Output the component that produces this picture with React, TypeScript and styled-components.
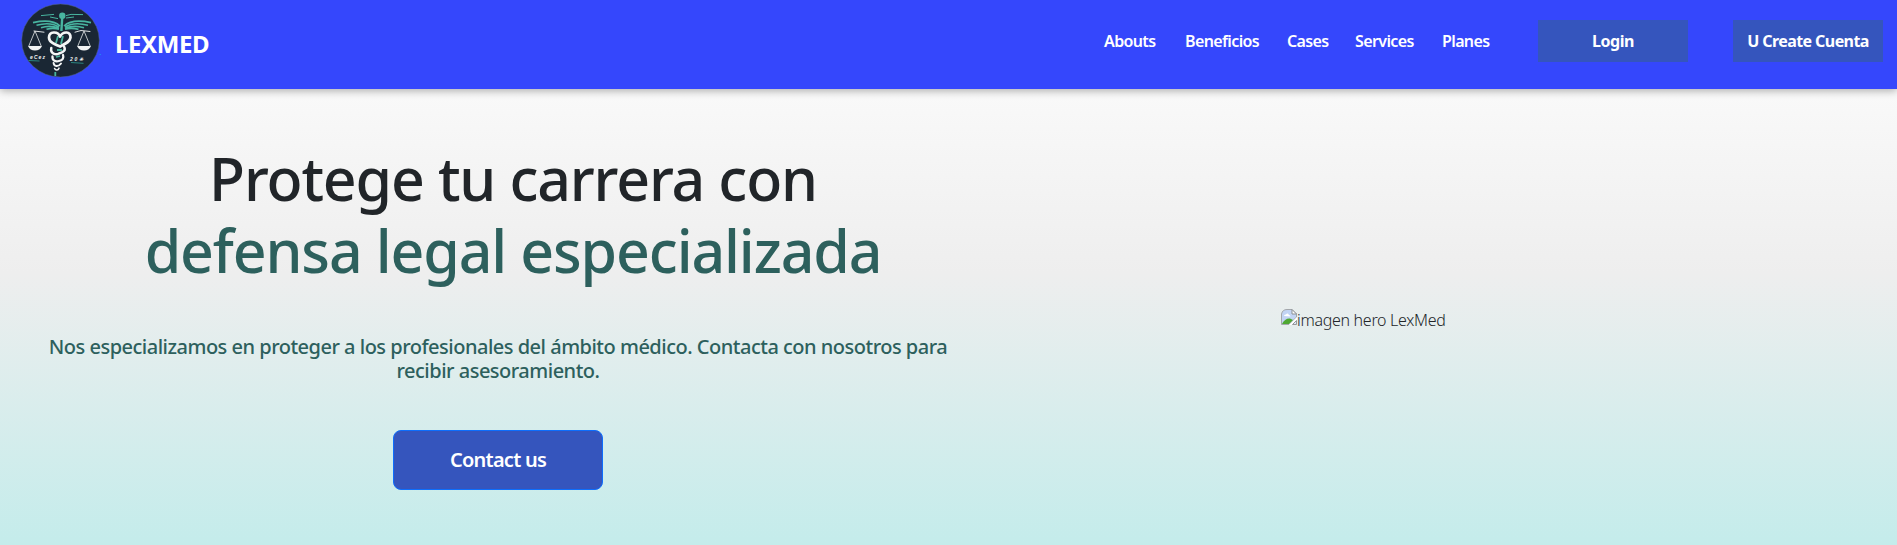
import React from 'react';
import styled, { createGlobalStyle } from 'styled-components';

const GlobalStyle = createGlobalStyle`
  * { box-sizing: border-box; }
  body {
    margin: 0;
    font-family: "Segoe UI", "Noto Sans", sans-serif;
    font-size: 16px;
    line-height: 24px;
    color: #212529;
  }
`;

const Page = styled.div`
  display: flex;
  flex-direction: column;
  height: 545px;
  overflow: hidden;
  background: linear-gradient(180deg, #ffffff 0%, #eeeeee 50%, #c4eceb 100%);
`;

const Navbar = styled.nav`
  display: flex;
  flex: none;
  align-items: flex-start;
  justify-content: space-between;
  height: 89px;
  padding: 0 14px 0 20px;
  background: #3547fc;
  box-shadow: 0 2px 8px rgba(0, 0, 0, 0.3);
`;

const Brand = styled.a`
  display: flex;
  align-items: center;
  gap: 14px;
  height: 89px;
  color: #fff;
`;

const Logo = styled.svg`
  display: block;
  width: 81px;
  height: 89px;
`;

const BrandName = styled.span`
  padding-bottom: 2px;
  font-size: 24px;
  line-height: 36px;
  font-weight: 700;
  letter-spacing: -0.4px;
`;

const Menu = styled.div`
  display: flex;
  align-items: center;
  padding-top: 20px;
`;

const Links = styled.ul`
  display: flex;
  gap: 28px;
  margin: 0 48px 0 0;
  padding: 0;
  list-style: none;
`;

const NavLink = styled.li<{ $width: number }>`
  width: ${(p) => p.$width}px;
  white-space: nowrap;
  font-weight: 600;
  letter-spacing: -0.62px;
  color: #fff;
`;

const Actions = styled.div`
  display: flex;
  gap: 45px;
`;

const NavButton = styled.button<{ $tracking: number }>`
  width: 150px;
  height: 42px;
  padding: 0;
  border: 0;
  background: #3555bd;
  color: #fff;
  font: 700 16px/24px "Segoe UI", "Noto Sans", sans-serif;
  letter-spacing: ${(p) => p.$tracking}px;
  white-space: nowrap;
`;

const Hero = styled.main`
  display: flex;
  flex: 1;
`;

const Copy = styled.section`
  display: flex;
  flex-direction: column;
  align-items: center;
  width: 996px;
  padding-top: 53px;
`;

const Title = styled.h1`
  margin: 0 0 0 30px;
  font-size: 59px;
  line-height: 72px;
  font-weight: 550;
  text-align: center;
  white-space: nowrap;
`;

const TitleLine = styled.span<{ $accent?: boolean; $tracking: number }>`
  display: block;
  color: ${(p) => (p.$accent ? '#2d605d' : '#212529')};
  letter-spacing: ${(p) => p.$tracking}px;
`;

const Lead = styled.p`
  margin: 49px 0 0;
  font-size: 20px;
  line-height: 24px;
  font-weight: 500;
  letter-spacing: -0.5px;
  text-align: center;
  white-space: nowrap;
  color: #2d605d;
`;

const ContactButton = styled.button`
  width: 210px;
  height: 60px;
  margin-top: 47px;
  padding: 0;
  border: 1px solid #0d6efd;
  border-radius: 8px;
  background: #3555bd;
  color: #fff;
  font: 600 20px/30px "Segoe UI", "Noto Sans", sans-serif;
  letter-spacing: -0.75px;
`;

const Visual = styled.section`
  display: flex;
  align-items: flex-start;
  padding: 219px 0 0 285px;
`;

const BrokenIcon = styled.svg`
  display: block;
  width: 16px;
  height: 16px;
  margin-top: 1px;
`;

const AltText = styled.span`
  font-weight: 320;
  letter-spacing: -0.3px;
  white-space: nowrap;
`;

const Scales = ({ x }: { x: number }) => (
  <g transform={`translate(${x} 0)`} fill="none" stroke="#e6eaea" strokeWidth="0.8">
    <path d="M0 31 L-6.2 46 M0 31 L6.2 46" />
    <path d="M-7 46 H7 Q5 50.5 0 50.5 Q-5 50.5 -7 46Z" fill="#f2f4f4" stroke="none" />
  </g>
);

const LexmedLogo = () => (
  <Logo viewBox="20 0 81 89" aria-label="LexMed">
    <ellipse cx="60.5" cy="40.5" rx="38.8" ry="36.5" fill="#1a2734" stroke="#56667b" strokeWidth="0.5" />
    <g fill="#48b5a0">
      <circle cx="62.3" cy="15.7" r="3.2" />
      <path d="M61 18 H63.4 L62.6 31 H60.2Z" />
    </g>
    <g fill="none" stroke="#48b5a0" strokeWidth="1.7">
      <path d="M60 26 Q52 18.5 33 22.6 M59 27 Q50 21.5 36.5 25.3 M59 28.4 Q50 24.5 41 27.8 M59 29.3 Q53 27.5 46.5 29.3" />
      <path d="M64 26 Q72 18.5 91 22.6 M65 27 Q74 21.5 88 25.3 M65 28.4 Q74 24.5 84 27.8 M65 29.3 Q71 27.5 78.5 29.3" />
      <path d="M41 15.6 L54 14.4 M50 17 L58 18.6 M66 15.6 L71 14.4 L83 14.6 M66 18 L74 17" strokeWidth="1" />
      <path d="M58 36 L56 43 M63 36 L61 44 M57 50 L62 50 M56 57 L60 56 M55.3 72 L55.3 76" strokeWidth="1.8" />
    </g>
    <g fill="none" stroke="#f4f6f6" strokeLinecap="round">
      <path d="M60 36.5 C58 31 49 31 49 37.5 C49 42 54 44 60 46.5 M60 36.5 C63 31 71 31 70.5 37.5 C70 42 65 44 60 46.5" strokeWidth="2.7" />
      <path d="M51.3 48 C50 54 56 55 59 53.5 C64 52 66 50 64 46.5" strokeWidth="2.5" />
      <path d="M52.5 56.5 C52 61 56 62 59 61 C63 60 64 58 63 55" strokeWidth="2.3" />
      <path d="M53.6 63 C54 66.5 58 67.5 61 63.5" strokeWidth="2" />
      <path d="M54.6 68.5 C55.5 70.6 58 70.6 59 68.2" strokeWidth="1.6" />
      <path d="M34 31 L44 32.2 M75 32.2 L81 30.5 L90 31.5" strokeWidth="0.9" />
    </g>
    <Scales x={35} />
    <Scales x={84} />
    <g fill="#f2f4f4" fontFamily="Liberation Sans" fontSize="5" fontStyle="italic" fontWeight="700">
      <text x="30" y="59" textLength="15">eCez</text>
      <text x="70" y="61" textLength="13">20✳</text>
    </g>
    <path d="M28.5 60.5 L39.5 61 M71 62.5 L83.5 63.3" stroke="#2f9d93" strokeWidth="0.8" />
    <path d="M99.5 54.5 H101" stroke="#2382f5" />
  </Logo>
);

const links = [
  { label: 'Abouts', width: 53 },
  { label: 'Beneficios', width: 74 },
  { label: 'Cases', width: 40 },
  { label: 'Services', width: 59 },
  { label: 'Planes', width: 48 },
];

export default function App() {
  return (
    <>
      <GlobalStyle />
      <Page>
        <Navbar>
          <Brand>
            <LexmedLogo />
            <BrandName>LEXMED</BrandName>
          </Brand>
          <Menu>
            <Links>
              {links.map((link) => (
                <NavLink key={link.label} $width={link.width}>{link.label}</NavLink>
              ))}
            </Links>
            <Actions>
              <NavButton $tracking={-0.4}>Login</NavButton>
              <NavButton $tracking={-0.58}>U Create Cuenta</NavButton>
            </Actions>
          </Menu>
        </Navbar>
        <Hero>
          <Copy>
            <Title>
              <TitleLine $tracking={-1.15}>Protege tu carrera con</TitleLine>
              <TitleLine $accent $tracking={-1.13}>defensa legal especializada</TitleLine>
            </Title>
            <Lead>
              Nos especializamos en proteger a los profesionales del ámbito médico. Contacta con nosotros para
              <br />
              recibir asesoramiento.
            </Lead>
            <ContactButton>Contact us</ContactButton>
          </Copy>
          <Visual>
            <BrokenIcon viewBox="0 0 16 16" aria-hidden="true">
              <path d="M0.5 15.5 V5 Q1.5 0.5 6 0.5 H11 L15.5 5 V8 L8 15.5Z" fill="#c2d4f4" stroke="#a3a7ab" />
              <path d="M11 0.5 V5 H15.5Z" fill="#fff" stroke="#8c9094" />
              <path d="M3 7 Q3 5.2 5 5.5 Q6.5 3.5 8 6 Q9.5 6 9.5 7.5Z" fill="#fff" />
              <path d="M1 15 Q4 9 9 9.5 L12 11 L8 15Z" fill="#4ea832" />
              <path d="M8 16 L16 8 V10.5 L10.5 16Z" fill="#fff" />
              <path d="M11.5 15.5 H15.5 V11.5Z" fill="#dce5f4" stroke="#96999c" />
            </BrokenIcon>
            <AltText>imagen hero LexMed</AltText>
          </Visual>
        </Hero>
      </Page>
    </>
  );
}
